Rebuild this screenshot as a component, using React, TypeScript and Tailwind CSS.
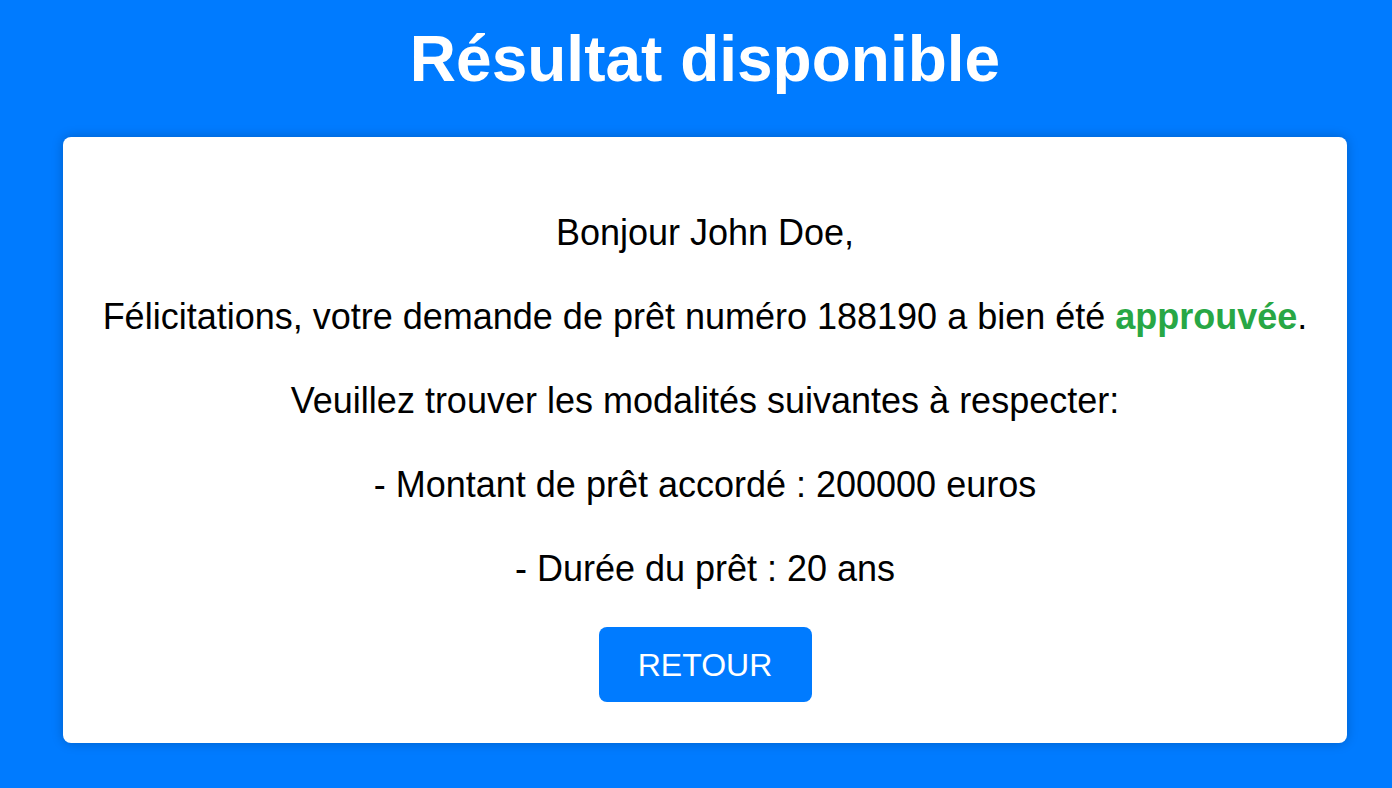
export default function App() {
  const font = { fontFamily: '"Liberation Sans", Arial, sans-serif' };

  return (
    <div
      className="min-h-[788px] w-full bg-[#007bff] pt-[27px] pb-[45px]"
      style={font}
    >
      <h1 className="text-center text-[64px] leading-[64px] font-bold text-white ml-[18px]">
        Résultat disponible
      </h1>

      <div className="mt-[46px] ml-[63px] w-[1284px] rounded-lg bg-white pt-[75px] pb-[41px] shadow-[0_0_12px_rgba(0,0,0,0.22)]">
        <div className="flex flex-col items-center gap-[42px] text-center text-[36px] leading-[42px] text-black">
          <p>Bonjour John Doe,</p>
          <p>
            Félicitations, votre demande de prêt numéro 188190 a bien été{" "}
            <span className="font-bold text-[#28a745]">approuvée</span>.
          </p>
          <p>Veuillez trouver les modalités suivantes à respecter:</p>
          <p>- Montant de prêt accordé : 200000 euros</p>
          <p>- Durée du prêt : 20 ans</p>
        </div>

        <div className="mt-[37px] flex justify-center">
          <button className="flex h-[75px] w-[213px] items-center justify-center rounded-lg bg-[#007bff] text-[32px] text-white">
            RETOUR
          </button>
        </div>
      </div>
    </div>
  );
}
